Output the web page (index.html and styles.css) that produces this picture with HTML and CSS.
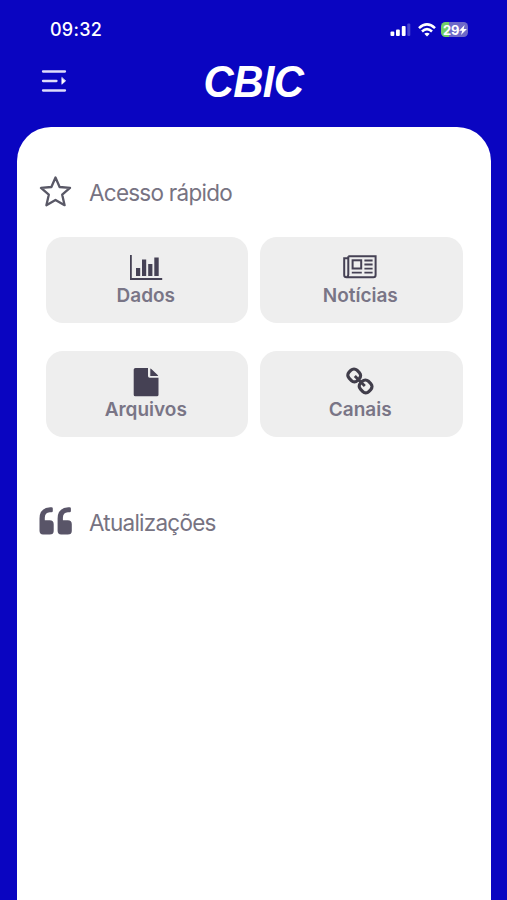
FILE: index.html
```html
<!DOCTYPE html>
<html lang="pt-BR">
<head>
<meta charset="UTF-8">
<meta name="viewport" content="width=device-width, initial-scale=1.0">
<title>CBIC</title>
<link rel="stylesheet" href="styles.css">
</head>
<body>

<div class="status-bar">
    <span class="time">09:32</span>
    <div class="status-icons">
        <svg class="signal" width="21" height="15" viewBox="0 0 21 15" fill="#fff">
            <rect x="0.5" y="9.5" width="3.8" height="4.5" rx="1"/>
            <rect x="6" y="7.5" width="3.8" height="6.5" rx="1"/>
            <rect x="11.8" y="4" width="3.8" height="10" rx="1"/>
            <rect x="17.3" y="1.5" width="3" height="12.5" rx="1" opacity="0.25"/>
        </svg>
        <svg class="wifi" width="18" height="14" viewBox="0 0 18 14" fill="none" stroke="#fff" stroke-width="2.6">
            <path d="M1 5.1Q9-2.3 17 5.1"/>
            <path d="M4 8.5Q9 3.9 14 8.5"/>
            <path d="M9 13.4L6.3 10.8Q9 8.6 11.7 10.8Z" fill="#fff" stroke="none"/>
        </svg>
        <div class="battery">
            <span>29</span>
            <svg width="8" height="10" viewBox="0 0 8 10" fill="#fff"><path d="M5.6 0L0.1 5.8H3.2L2 10L7.9 4H4.7Z"/></svg>
        </div>
    </div>
</div>

<header class="header">
    <button class="menu-btn" aria-label="Menu">
        <svg width="26" height="24" viewBox="0 0 26 24" fill="none" stroke="#dedcfa" stroke-width="2.3" stroke-linecap="round">
            <path d="M2 2.5H24M2 12H15.5M2 21.5H24"/>
            <path d="M20.8 8.7V15.3L24.5 12Z" fill="#fff" stroke="#fff" stroke-width="0.6"/>
        </svg>
    </button>
    <h1 class="logo">CBIC</h1>
</header>

<main class="container">
    <h2 class="section-title">
        <svg width="33" height="32" viewBox="0 0 33 32" fill="none" stroke="#595866" stroke-width="2.3" stroke-linejoin="round">
            <path d="M16.5 1.5L20.6 11L31 11.9L23.2 18.7L25.6 29.2L16.5 23.9L7.4 29.2L9.8 18.7L2 11.9L12.4 11Z"/>
        </svg>
        <span>Acesso rápido</span>
    </h2>

    <div class="grid">
        <a class="tile">
            <svg width="34" height="30" viewBox="0 0 34 30" fill="#454154">
                <path d="M1 2H2.8V25H33.2V27H1Z"/>
                <rect x="7" y="15" width="4.2" height="8"/>
                <rect x="13" y="6.5" width="4.2" height="16.5"/>
                <rect x="19.2" y="11" width="4.2" height="12"/>
                <rect x="25.3" y="4.5" width="4.4" height="18.5"/>
            </svg>
            <span>Dados</span>
        </a>
        <a class="tile">
            <svg width="34" height="30" viewBox="0 0 34 30" fill="none" stroke="#454154" stroke-width="2">
                <path d="M5.3 3.2H32.6V22Q32.6 24.2 30.4 24.2H3.5Q1.2 24.2 1.2 22V5.3H5.3M5.3 3.2V21.5Q5.3 23.5 3.8 24"/>
                <rect x="9.6" y="7.3" width="8.6" height="8.2"/>
                <path d="M21.4 7.5H29.6M21.4 11.5H29.6M21.4 15.6H29.6M8.8 19.7H18.8M21.4 19.7H29.6" stroke-width="1.8"/>
            </svg>
            <span>Notícias</span>
        </a>
        <a class="tile">
            <svg width="34" height="30" viewBox="0 0 34 30" fill="#454154">
                <path d="M6.5 1H19V9Q19 10.7 20.7 10.7H29.5V27.7Q29.5 29.3 27.9 29.3H6.3Q4.7 29.3 4.7 27.7V2.6Q4.7 1 6.5 1Z"/>
                <path d="M21.3 1.4Q22 1.5 22.6 2.2L28.4 7.8Q29.1 8.5 29.2 8.9H21.3Z"/>
            </svg>
            <span>Arquivos</span>
        </a>
        <a class="tile">
            <svg width="34" height="30" viewBox="0 0 34 30" fill="none" stroke="#403d4a" stroke-width="3.2">
                <rect x="5.3" y="2.8" width="11.8" height="11.2" rx="4.2" transform="rotate(45 11.2 8.4)"/>
                <rect x="16.7" y="13.8" width="11.8" height="11.2" rx="4.2" transform="rotate(45 22.6 19.4)"/>
                <path d="M11.8 9L21.8 19" stroke-width="2.8"/>
            </svg>
            <span>Canais</span>
        </a>
    </div>

    <h2 class="section-title updates">
        <svg width="33" height="32" viewBox="0 0 33 32" fill="#595568">
            <path id="quote" d="M12.5 2.3H11.2Q0.5 3 0.5 13.5V25.8Q0.5 29.5 4 29.5H10.7Q14.7 29.5 14.7 26V19.2Q14.7 15.3 10.7 15.3H5.8V12.8Q5.8 7.7 10.8 7.3H12.5Q13.8 7.3 13.8 6V3.6Q13.8 2.3 12.5 2.3Z"/>
            <use href="#quote" x="18.1"/>
        </svg>
        <span>Atualizações</span>
    </h2>
</main>

</body>
</html>
```
FILE: styles.css
```css
* {
    box-sizing: border-box;
}
body {
    margin: 0;
    height: 100vh;
    display: flex;
    flex-direction: column;
    overflow: hidden;
    background-color: #0a05c1;
    font-family: Inter, "Liberation Sans", sans-serif;
}
.status-bar {
    height: 59px;
    padding: 0 39px 0 50px;
    display: flex;
    align-items: center;
    justify-content: space-between;
    color: #fff;
}
.time {
    font-size: 18px;
    font-weight: 500;
    letter-spacing: 0.25px;
}
.status-icons {
    display: flex;
    align-items: center;
}
.wifi {
    margin: 0 5px 0 7px;
}
.battery {
    width: 27px;
    height: 15px;
    padding-left: 2px;
    display: flex;
    align-items: center;
    border-radius: 4.5px;
    background: linear-gradient(to right, #72cf67 8px, #6e69c8 8px);
    font-size: 13px;
    font-weight: 700;
    letter-spacing: -0.3px;
}
.header {
    height: 68px;
    padding: 0 41px;
    display: grid;
    grid-template-columns: 26px 1fr 26px;
}
.menu-btn {
    height: 24px;
    margin-top: 10px;
    padding: 0;
    border: none;
    background: none;
}
.menu-btn svg {
    display: block;
}
.logo {
    margin: 0;
    font: italic 700 44px/45px "Liberation Sans", sans-serif;
    letter-spacing: -0.6px;
    text-align: center;
    color: #fff;
    transform: scaleX(0.95);
}
.container {
    flex: 1;
    margin: 0 16px 0 17px;
    padding: 49px 28.5px 0;
    border-radius: 34px 34px 0 0;
    background-color: #fff;
}
.section-title {
    height: 32px;
    margin: 0 0 28.5px -6.5px;
    display: flex;
    align-items: center;
    gap: 17px;
    font-size: 22.5px;
    font-weight: 400;
    letter-spacing: -0.75px;
    color: #777382;
}
.section-title span {
    padding-top: 1px;
}
.grid {
    display: grid;
    grid-template-columns: 202.5px 202.5px;
    gap: 27.5px 12px;
}
.tile {
    height: 86.5px;
    padding: 16.5px 2px 0 0;
    display: flex;
    flex-direction: column;
    align-items: center;
    border-radius: 17px;
    background-color: #eee;
    color: #797586;
    font-size: 19px;
    font-weight: 600;
    line-height: 25px;
}
.updates {
    margin-top: 68px;
}
.updates span {
    padding-top: 3px;
}
```
